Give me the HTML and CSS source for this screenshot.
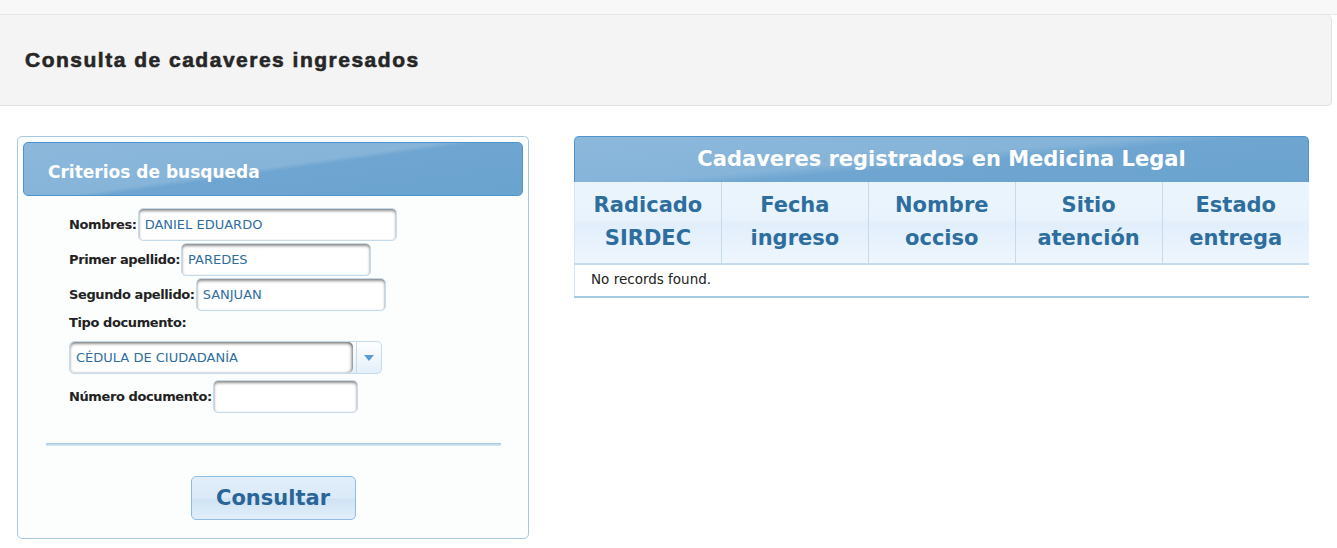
FILE: index.html
```html
<!DOCTYPE html>
<html lang="es">
<head>
<meta charset="utf-8">
<title>Consulta de cadaveres ingresados</title>
<link rel="stylesheet" href="styles.css">
</head>
<body>
<div class="topbar"></div>
<div class="page-header">
  <h1 class="page-title">Consulta de cadaveres ingresados</h1>
</div>
<div class="content">
  <div class="panel">
    <div class="panel-header">Criterios de busqueda</div>
    <form class="form">
      <div class="row">
        <label class="lbl">Nombres:</label>
        <input class="inp w-nombres" type="text" value="DANIEL EDUARDO">
      </div>
      <div class="row">
        <label class="lbl">Primer apellido:</label>
        <input class="inp w-ap1" type="text" value="PAREDES">
      </div>
      <div class="row">
        <label class="lbl">Segundo apellido:</label>
        <input class="inp w-ap2" type="text" value="SANJUAN">
      </div>
      <div class="row-label">
        <label class="lbl">Tipo documento:</label>
      </div>
      <div class="select">
        <div class="select-label">CÉDULA DE CIUDADANÍA</div>
        <div class="select-trigger"><span class="tri"></span></div>
      </div>
      <div class="row row-num">
        <label class="lbl">Número documento:</label>
        <input class="inp w-num" type="text" value="">
      </div>
    </form>
    <div class="sep"></div>
    <div class="actions">
      <button class="btn" type="button">Consultar</button>
    </div>
  </div>

  <div class="table-wrap">
    <div class="table-title">Cadaveres registrados en Medicina Legal</div>
    <table class="grid">
      <thead>
        <tr>
          <th>Radicado<br>SIRDEC</th>
          <th>Fecha<br>ingreso</th>
          <th>Nombre<br>occiso</th>
          <th>Sitio<br>atención</th>
          <th>Estado<br>entrega</th>
        </tr>
      </thead>
      <tbody>
        <tr><td colspan="5" class="empty">No records found.</td></tr>
      </tbody>
    </table>
  </div>
</div>
</body>
</html>
```
FILE: styles.css
```css
html, body {
  margin: 0;
  padding: 0;
  background: #ffffff;
  font-family: "DejaVu Sans", Verdana, sans-serif;
}

.topbar {
  height: 14px;
  background: #f8f8f8;
  border-bottom: 1px solid #e6e6e6;
}

.page-header {
  margin: 0 5px 0 -6px;
  height: 90px;
  background: #f4f4f4;
  border: 1px solid #e0e0e0;
  border-top: none;
  border-radius: 0 5px 5px 0;
  display: flex;
  align-items: center;
  padding-left: 30px;
}

.page-title {
  margin: 0;
  font-family: "Liberation Sans", Arial, sans-serif;
  font-weight: bold;
  font-size: 21px;
  color: #262626;
  letter-spacing: 1.5px;
  -webkit-text-stroke: 0.6px #262626;
}

.content {
  display: flex;
  align-items: flex-start;
  padding: 30px 0 0 17px;
  gap: 45px;
}

/* left panel */
.panel {
  width: 500px;
  padding: 5px 5px 18px 5px;
  border: 1px solid #a6c9e2;
  border-radius: 5px;
  background: #fcfdfd;
}

.panel-header {
  border: 1px solid #4d94cf;
  border-radius: 5px;
  background: linear-gradient(172deg, #8bb8db 0%, #86b4d9 48%, #6fa6d1 52%, #6aa3cf 100%);
  color: #ffffff;
  font-weight: bold;
  font-size: 17px;
  display: flex;
  align-items: center;
  padding-left: 24px;
  padding-top: 6px;
  height: 46px;
}

.form {
  margin: 12px 0 0 46px;
}

.row {
  display: flex;
  align-items: center;
  height: 33px;
  margin-bottom: 2px;
}

.lbl {
  font-weight: bold;
  font-size: 13px;
  color: #222222;
  letter-spacing: -0.4px;
}

.inp {
  box-sizing: border-box;
  height: 33px;
  margin-left: 1px;
  border: 1px solid #c5dbec;
  border-radius: 5px;
  background: #ffffff;
  box-shadow: inset 0 2px 3px rgba(0, 0, 0, 0.45), inset 0 0 1px rgba(0,0,0,0.2);
  font-family: "DejaVu Sans", Verdana, sans-serif;
  font-size: 13px;
  color: #2e6e9e;
  padding: 0 6px;
  outline: none;
}

.w-nombres { width: 259px; }
.w-ap1 { width: 190px; }
.w-ap2 { width: 190px; }
.w-num { width: 145px; }

.row-label {
  height: 18px;
  display: flex;
  align-items: center;
  margin-top: 0;
}

.select {
  display: flex;
  margin-top: 10px;
  width: 313px;
  height: 33px;
  box-sizing: border-box;
  border: 1px solid #c5dbec;
  border-radius: 5px;
  background: linear-gradient(#ffffff, #e4effa);
}

.select-label {
  flex: 1;
  box-sizing: border-box;
  height: 31px;
  margin-right: 3px;
  border-radius: 5px;
  background: #ffffff;
  box-shadow: inset 0 2px 3px rgba(0, 0, 0, 0.4), inset -2px 0 3px rgba(0,0,0,0.3);
  display: flex;
  align-items: center;
  padding-left: 6px;
  font-size: 13px;
  color: #2e6e9e;
}

.select-trigger {
  width: 24px;
  border-left: 1px solid #c5dbec;
  display: flex;
  align-items: center;
  justify-content: center;
}

.tri {
  width: 0;
  height: 0;
  border-left: 5px solid transparent;
  border-right: 5px solid transparent;
  border-top: 6px solid #5b9dd6;
}

.row-num {
  margin-top: 6px;
}

.sep {
  margin: 30px 22px 0 23px;
  height: 1px;
  border-top: 1px solid #a9cbe6;
  border-bottom: 1px solid #d2e4f3;
  background: #c6dcef;
}

.actions {
  display: flex;
  justify-content: center;
  padding-top: 30px;
}

.btn {
  width: 165px;
  height: 44px;
  border: 1px solid #8fbde4;
  border-radius: 5px;
  background: linear-gradient(#e1eefa 0%, #dbeaf8 50%, #cfe3f5 52%, #e2eefa 100%);
  color: #2a6597;
  font-family: "DejaVu Sans", Verdana, sans-serif;
  font-weight: bold;
  font-size: 21px;
  cursor: pointer;
  padding: 0;
}

/* right table */
.table-wrap {
  width: 735px;
}

.table-title {
  height: 45px;
  border: 1px solid #4d94cf;
  border-bottom: none;
  border-radius: 5px 5px 0 0;
  background: linear-gradient(175deg, #8bb8db 0%, #86b4d9 46%, #6fa6d1 54%, #6aa3cf 100%);
  color: #ffffff;
  font-weight: bold;
  font-size: 21px;
  display: flex;
  align-items: center;
  justify-content: center;
  padding-bottom: 1px;
  box-sizing: border-box;
  height: 46px;
}

.grid {
  width: 100%;
  border-collapse: collapse;
  table-layout: fixed;
}

.grid th {
  height: 81px;
  box-sizing: border-box;
  padding: 7px 4px 8px;
  border: 1px solid #c5dbec;
  border-top: none;
  border-bottom: 2px solid #c5dbec;
  background: linear-gradient(#eaf4fd 0%, #e9f3fd 45%, #e1eefb 52%, #eef6fe 100%);
  color: #2e6e9e;
  font-weight: bold;
  font-size: 21px;
  line-height: 33px;
}

.grid th:first-child { border-left-color: #d6e6f3; }
.grid th:last-child { border-right: none; }

.grid td.empty {
  height: 33px;
  box-sizing: border-box;
  padding: 0 16px 3px;
  background: #ffffff;
  border-left: 1px solid #d6e6f3;
  border-bottom: 2px solid #a6c9e2;
  font-size: 13.5px;
  color: #222222;
}
```
